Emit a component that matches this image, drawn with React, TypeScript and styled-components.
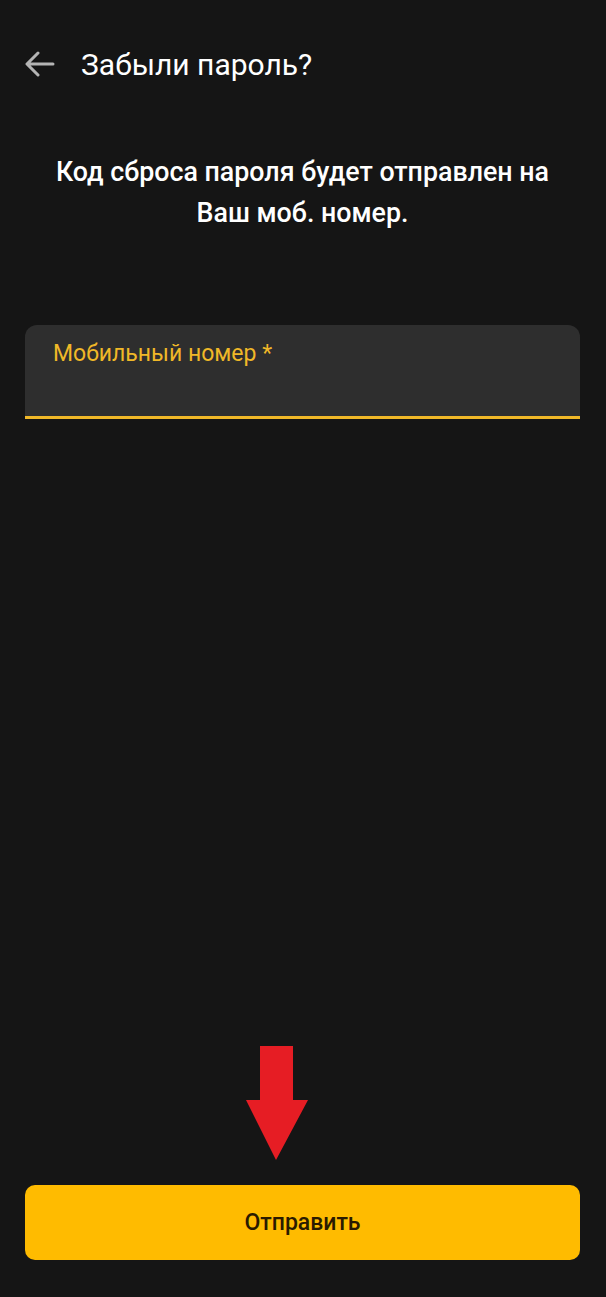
import styled, { createGlobalStyle } from "styled-components";

const GlobalStyle = createGlobalStyle`
  html, body {
    margin: 0;
    padding: 0;
    background: #151515;
  }
  * {
    box-sizing: border-box;
  }
`;

const Screen = styled.div`
  display: flex;
  flex-direction: column;
  min-height: 100vh;
  background: #151515;
  font-family: Roboto, "Noto Sans", sans-serif;
  color: #fff;
  padding: 0 26px 37px 25px;
`;

const Header = styled.div`
  display: flex;
  align-items: center;
  gap: 26px;
  height: 128px;
`;

const BackButton = styled.button`
  display: flex;
  align-items: center;
  justify-content: center;
  padding: 0;
  background: none;
  border: none;
  color: #b4b4b4;
  width: 30px;
  height: 30px;
  cursor: pointer;
`;

const Title = styled.h1`
  margin: 0;
  font-size: 30px;
  font-weight: 400;
  color: #fff;
`;

const Hint = styled.p`
  margin: 24px 0 0;
  text-align: center;
  font-size: 26.8px;
  font-weight: 500;
  line-height: 41px;
  color: #fff;
`;

const Field = styled.div`
  margin-top: 91px;
  height: 94px;
  background: #2e2e2e;
  border-radius: 12px 12px 0 0;
  border-bottom: 3px solid #f0b828;
  padding: 15px 28px;
`;

const FieldLabel = styled.label`
  font-size: 23px;
  color: #f0b828;
`;

const Spacer = styled.div`
  flex: 1;
`;

const ButtonWrap = styled.div`
  position: relative;
`;

const SubmitButton = styled.button`
  width: 100%;
  height: 75px;
  border: none;
  border-radius: 10px;
  background: #ffbb00;
  color: #2a1a00;
  font-family: Roboto, "Noto Sans", sans-serif;
  font-size: 23px;
  font-weight: 500;
  cursor: pointer;
`;

const Pointer = styled.svg`
  position: absolute;
  left: 221px;
  top: -139px;
`;

const ArrowLeft = () => (
  <svg width="30" height="26" viewBox="0 0 30 26" fill="none">
    <path
      d="M28 13H3M13 2L2 13l11 11"
      stroke="currentColor"
      strokeWidth="3"
      strokeLinecap="round"
      strokeLinejoin="round"
    />
  </svg>
);

const App = () => {
  return (
    <>
      <GlobalStyle />
      <Screen>
        <Header>
          <BackButton>
            <ArrowLeft />
          </BackButton>
          <Title>Забыли пароль?</Title>
        </Header>
        <Hint>
          Код сброса пароля будет отправлен на
          <br />
          Ваш моб. номер.
        </Hint>
        <Field>
          <FieldLabel>Мобильный номер *</FieldLabel>
        </Field>
        <Spacer />
        <ButtonWrap>
          <Pointer width="62" height="116" viewBox="0 0 62 116">
            <polygon
              points="14,0 47,0 47,54 62,54 30,114 0,54 14,54"
              fill="#e61d24"
            />
          </Pointer>
          <SubmitButton>Отправить</SubmitButton>
        </ButtonWrap>
      </Screen>
    </>
  );
};

export default App;
